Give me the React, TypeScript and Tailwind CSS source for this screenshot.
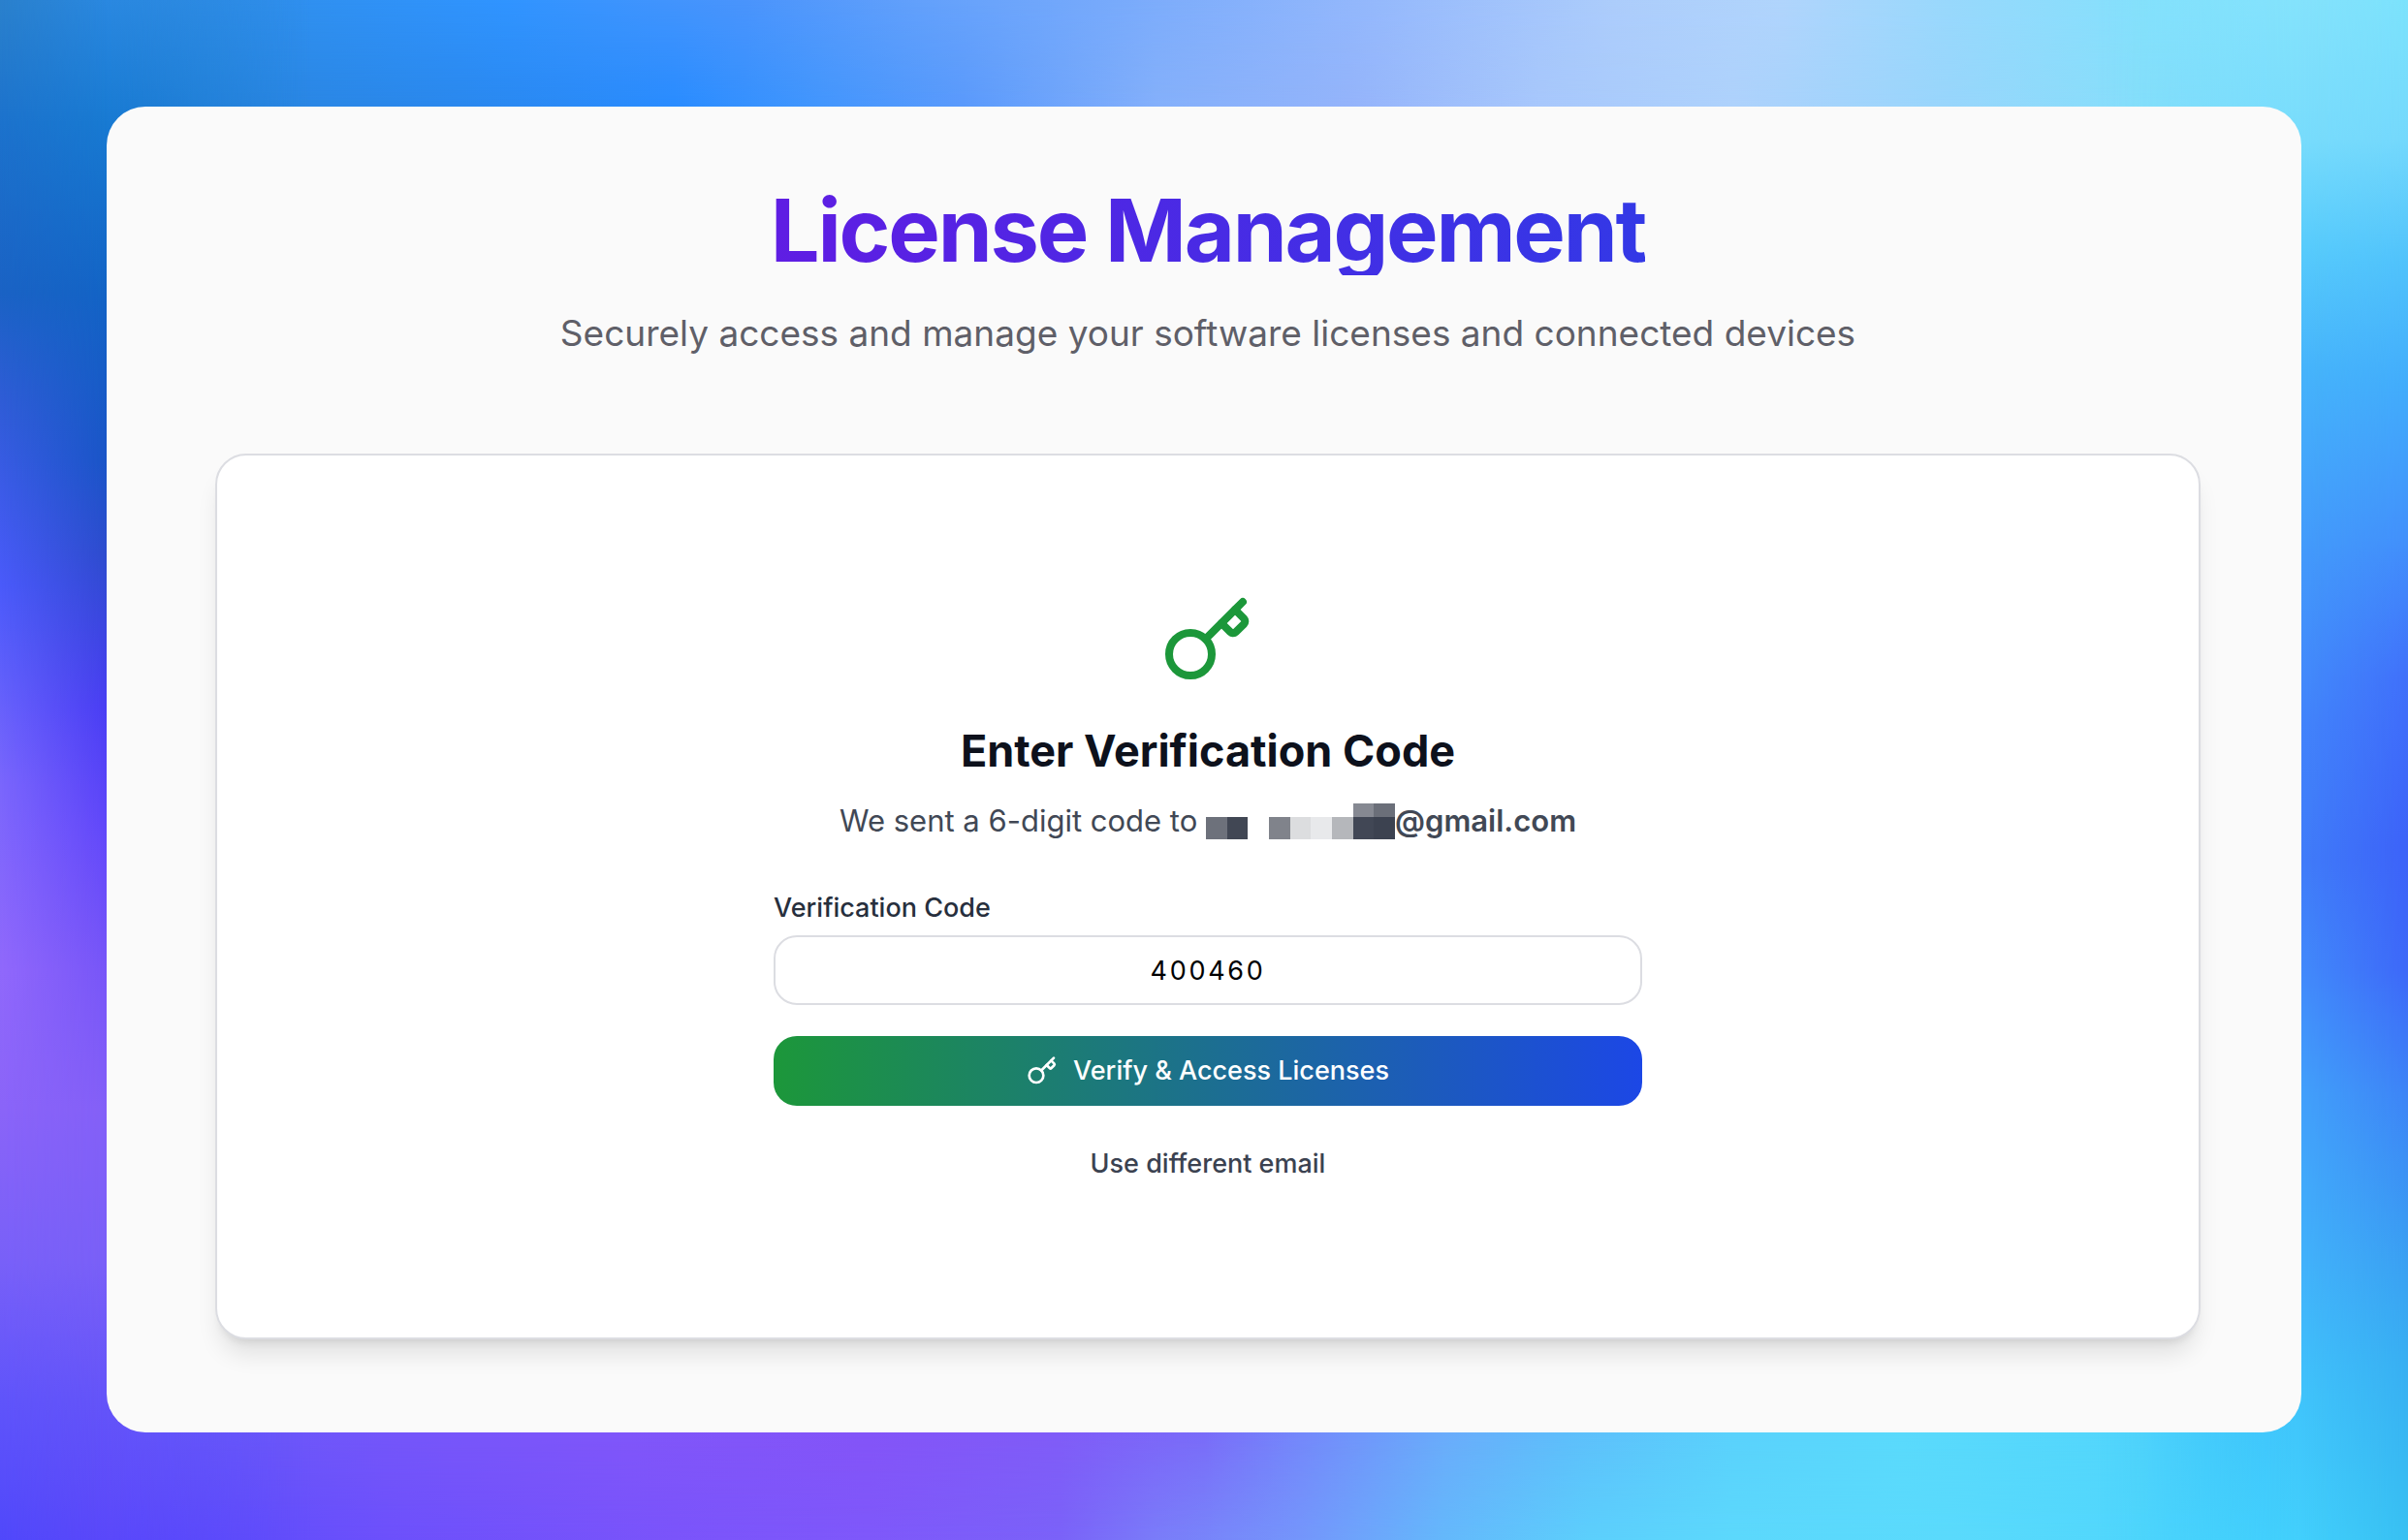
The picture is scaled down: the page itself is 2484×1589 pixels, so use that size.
import { useState } from "react";
import { Key } from "lucide-react";

const MASK = [
  ["bg-transparent", "bg-transparent", "bg-transparent", "bg-transparent", "bg-transparent", "bg-transparent", "bg-transparent", "bg-[#868992]", "bg-[#6b6f79]"],
  ["bg-[#6d717b]", "bg-[#414754]", "bg-transparent", "bg-[#80838b]", "bg-[#dcdddf]", "bg-[#e8e9eb]", "bg-[#b5b7bb]", "bg-[#414755]", "bg-[#3c4250]"],
];

/* Pixelated blocks that hide the first part of the address. */
function HiddenName() {
  return (
    <span className="inline-block h-[37px] w-[195px] overflow-hidden align-[-8px]">
      <span className="grid h-full grid-cols-9 grid-rows-[14px_23px]">
        {MASK.flat().map((c, i) => (
          <span key={i} className={c} />
        ))}
      </span>
    </span>
  );
}

/* Colour wash behind the panel: each edge blends an inner and an outer gradient. */
function Backdrop() {
  return (
    <div aria-hidden="true" className="absolute inset-0 -z-10 overflow-hidden">
      <div className="absolute inset-x-0 top-0 h-40 bg-[linear-gradient(90deg,#1a70c8_0%,#2a86de_8%,#2a88ee_19%,#298cff_28%,#4296fd_34%,#5a9afc_40%,#84b0fb_48%,#94b4fb_56%,#a8c8fc_64%,#aed2fc_72%,#98d6fc_81%,#86dffb_89%,#74dafc_100%)]" />
      <div className="absolute inset-x-0 top-0 h-[110px] bg-[linear-gradient(90deg,#2a80c8_0%,#2c88da_4%,#3090f0_13%,#3094ff_21%,#4a94fc_31%,#62a0fb_38%,#7cacfb_48%,#94b8fc_57%,#acccfb_67%,#b0d4fc_74%,#98d8fc_81%,#84e0fc_89%,#7ae2fd_100%)] mask-[linear-gradient(180deg,black,transparent)]" />
      <div className="absolute inset-x-0 bottom-0 h-40 bg-[linear-gradient(90deg,#5f58fb_0%,#6658fa_8%,#7456fa_16%,#8056fa_26%,#8454f8_36%,#805cf8_44%,#7a6cf9_50%,#7488fb_54%,#6aacfb_60%,#5ebefb_65%,#5ad2fc_72%,#5adafc_79%,#52d6fc_89%,#40ccfc_94%,#38bcf0_100%)]" />
      <div className="absolute inset-x-0 bottom-0 h-[110px] bg-[linear-gradient(90deg,#5048fb_0%,#5c4cfb_8%,#6c50fb_16%,#7a54fa_28%,#7e58fa_36%,#7a62f8_44%,#7a7cf9_48%,#7496fb_54%,#64b8fb_60%,#5ccffc_66%,#5cd8fc_72%,#5adafc_81%,#50d6fc_89%,#42cefc_95%,#36bcf0_100%)] mask-[linear-gradient(0deg,black,transparent)]" />
      <div className="absolute inset-y-0 left-0 w-80 bg-[linear-gradient(180deg,#2a88e0_0%,#187ad2_8%,#1364c6_19%,#1a55c8_30%,#2e4ccf_36%,#4a3ef4_46%,#6248fa_54%,#7856f8_63%,#8460f8_72%,#7a60f8_82%,#6454f9_91%,#5a48fa_100%)] mask-[linear-gradient(90deg,black_110px,transparent_100%)]" />
      <div className="absolute inset-y-0 left-0 w-[110px] bg-[linear-gradient(180deg,#2a80cc_0%,#1c72cc_8%,#1a62c4_19%,#2f5cd6_26%,#4a5afa_38%,#7a66fc_51%,#9068fb_63%,#8a64f8_72%,#7860f8_82%,#5f54fa_91%,#5048fa_100%)] mask-[linear-gradient(90deg,black,transparent)]" />
      <div className="absolute inset-y-0 right-0 w-80 bg-[linear-gradient(180deg,#84e2fc_0%,#78dcfc_9%,#58ccfc_16%,#46b4fb_24%,#439cfb_35%,#4284fb_47%,#407cf9_56%,#428afb_63%,#42a0fb_71%,#42b2fb_82%,#40c4fb_91%,#42cffc_100%)] mask-[linear-gradient(270deg,black_110px,transparent_100%)]" />
      <div className="absolute inset-y-0 right-0 w-[110px] bg-[linear-gradient(180deg,#7ce2fc_0%,#74d8fc_9%,#50c2fb_17%,#42acfb_25%,#4290fb_35%,#4070fa_44%,#3c62f8_55%,#3d68f8_63%,#3d84f6_71%,#3aa0f2_82%,#38aef2_88%,#38c0f2_100%)] mask-[linear-gradient(270deg,black,transparent)]" />
    </div>
  );
}

export default function App() {
  const [code, setCode] = useState("400460");
  return (
    <div className="relative isolate min-h-screen p-[110px] font-[Inter,sans-serif]">
      <Backdrop />
      <main className="rounded-[40px] bg-[#fafafa] pt-[78px] pr-[104px] pb-24 pl-28">
        <header className="mb-24 text-center">
          <h1 className="mx-auto mb-8 w-fit bg-linear-to-r/srgb from-[#5f1de3] to-[#3338e6] bg-clip-text pt-1 text-[90px] leading-[92px] font-bold tracking-tight text-transparent">
            License Management
          </h1>
          <p className="text-[37px] leading-[56px] text-[#5f5f68]">
            Securely access and manage your software licenses and connected devices
          </p>
        </header>
        <section className="rounded-[32px] border-2 border-[#dcdde2] bg-white px-16 py-[143px] shadow-xl">
          <div className="mx-auto flex max-w-4xl flex-col items-center">
            <Key className="size-24 text-[#1c973a]" strokeWidth={2} />
            <h2 className="mt-[34px] text-[45px] leading-[64px] font-bold text-[#0d111c]">Enter Verification Code</h2>
            <p className="mt-4 text-[31px] leading-[48px] whitespace-nowrap text-[#414855]">
              We sent a 6-digit code to <HiddenName />
              <span className="font-semibold">@gmail.com</span>
            </p>
            <form className="mt-[46px] flex w-full flex-col" onSubmit={(e) => e.preventDefault()}>
              <label htmlFor="code" className="text-[27px] leading-10 font-medium text-[#272f3d]">
                Verification Code
              </label>
              <input
                id="code"
                value={code}
                onChange={(e) => setCode(e.target.value)}
                className="mt-2 h-[72px] rounded-3xl border-2 border-[#dcdde2] bg-white text-center text-[27px] tracking-widest text-black"
              />
              <button
                type="submit"
                className="mt-8 flex h-[72px] items-center justify-center gap-4 rounded-3xl bg-linear-to-r/srgb from-[#1c973a] to-[#1c47e6] text-[27px] font-medium text-white"
              >
                <Key className="size-8" strokeWidth={2} />
                Verify &amp; Access Licenses
              </button>
              <button type="button" className="mt-6 h-[72px] text-[27px] font-medium text-[#3b4250]">
                Use different email
              </button>
            </form>
          </div>
        </section>
      </main>
    </div>
  );
}
